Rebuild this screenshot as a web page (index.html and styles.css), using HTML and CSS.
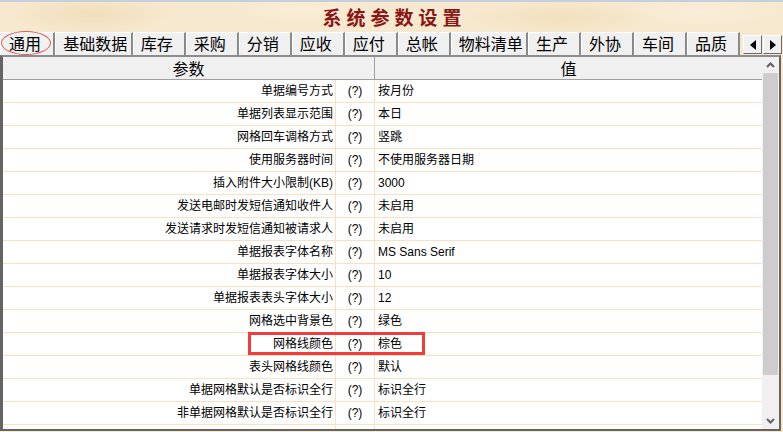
FILE: index.html
```html
<!DOCTYPE html>
<html lang="zh">
<head>
<meta charset="utf-8">
<title>系统参数设置</title>
<link rel="stylesheet" href="styles.css">
</head>
<body>
<div class="topstrip"></div>
<div class="title">系统参数设置</div>
<div class="tabs">
  <div class="tab active">通用<span class="ellipse"></span></div>
  <div class="tab">基础数据</div>
  <div class="tab">库存</div>
  <div class="tab">采购</div>
  <div class="tab">分销</div>
  <div class="tab">应收</div>
  <div class="tab">应付</div>
  <div class="tab">总帐</div>
  <div class="tab">物料清单</div>
  <div class="tab">生产</div>
  <div class="tab">外协</div>
  <div class="tab">车间</div>
  <div class="tab">品质</div>
  <div class="tabnav">
    <div class="navbtn"><svg width="8" height="10" viewBox="0 0 8 10"><polygon points="7,0 7,10 1,5" fill="#000"/></svg></div>
    <div class="navbtn"><svg width="8" height="10" viewBox="0 0 8 10"><polygon points="1,0 1,10 7,5" fill="#000"/></svg></div>
  </div>
</div>
<div class="grid">
  <div class="table">
    <div class="head">
      <div class="h-param">参数</div>
      <div class="h-val">值</div>
    </div>
    <div class="body">
      <div class="row"><div class="c-param">单据编号方式</div><div class="c-q">(?)</div><div class="c-val">按月份</div></div>
      <div class="row"><div class="c-param">单据列表显示范围</div><div class="c-q">(?)</div><div class="c-val">本日</div></div>
      <div class="row"><div class="c-param">网格回车调格方式</div><div class="c-q">(?)</div><div class="c-val">竖跳</div></div>
      <div class="row"><div class="c-param">使用服务器时间</div><div class="c-q">(?)</div><div class="c-val">不使用服务器日期</div></div>
      <div class="row"><div class="c-param">插入附件大小限制(KB)</div><div class="c-q">(?)</div><div class="c-val">3000</div></div>
      <div class="row"><div class="c-param">发送电邮时发短信通知收件人</div><div class="c-q">(?)</div><div class="c-val">未启用</div></div>
      <div class="row"><div class="c-param">发送请求时发短信通知被请求人</div><div class="c-q">(?)</div><div class="c-val">未启用</div></div>
      <div class="row"><div class="c-param">单据报表字体名称</div><div class="c-q">(?)</div><div class="c-val">MS Sans Serif</div></div>
      <div class="row"><div class="c-param">单据报表字体大小</div><div class="c-q">(?)</div><div class="c-val">10</div></div>
      <div class="row"><div class="c-param">单据报表表头字体大小</div><div class="c-q">(?)</div><div class="c-val">12</div></div>
      <div class="row"><div class="c-param">网格选中背景色</div><div class="c-q">(?)</div><div class="c-val">绿色</div></div>
      <div class="row marked"><div class="c-param">网格线颜色</div><div class="c-q">(?)</div><div class="c-val">棕色</div><span class="highlight"></span></div>
      <div class="row"><div class="c-param">表头网格线颜色</div><div class="c-q">(?)</div><div class="c-val">默认</div></div>
      <div class="row"><div class="c-param">单据网格默认是否标识全行</div><div class="c-q">(?)</div><div class="c-val">标识全行</div></div>
      <div class="row"><div class="c-param">非单据网格默认是否标识全行</div><div class="c-q">(?)</div><div class="c-val">标识全行</div></div>
      <div class="row"><div class="c-param"></div><div class="c-q"></div><div class="c-val"></div></div>
    </div>
  </div>
  <div class="vscroll">
    <div class="sbtn"><svg width="9" height="6" viewBox="0 0 9 6"><polyline points="1,5 4.5,1.5 8,5" fill="none" stroke="#606060" stroke-width="2"/></svg></div>
    <div class="thumb"></div>
    <div class="track"></div>
    <div class="sbtn"><svg width="9" height="6" viewBox="0 0 9 6"><polyline points="1,1 4.5,4.5 8,1" fill="none" stroke="#606060" stroke-width="2"/></svg></div>
  </div>
</div>
</body>
</html>
```
FILE: styles.css
```css
html, body {
  margin: 0;
  padding: 0;
}
body {
  width: 783px;
  height: 432px;
  overflow: hidden;
  font-family: "Liberation Sans", "Noto Sans CJK SC", sans-serif;
  background-color: #f7e9cf;
  background-image:
    radial-gradient(ellipse 120px 30px at 90px 14px, rgba(236, 212, 170, 0.55), rgba(236, 212, 170, 0) 70%),
    radial-gradient(ellipse 140px 25px at 560px 18px, rgba(238, 214, 172, 0.5), rgba(238, 214, 172, 0) 70%),
    radial-gradient(ellipse 100px 20px at 300px 10px, rgba(250, 240, 220, 0.7), rgba(250, 240, 220, 0) 70%),
    radial-gradient(ellipse 120px 24px at 700px 12px, rgba(250, 240, 222, 0.7), rgba(250, 240, 222, 0) 70%);
}
.topstrip {
  height: 2px;
  background: #c6cfe0;
}
.title {
  height: 30px;
  display: flex;
  align-items: center;
  justify-content: center;
  font-family: "Noto Sans CJK SC", sans-serif;
  font-size: 19px;
  font-weight: 700;
  letter-spacing: 5px;
  color: #8a1616;
  padding-left: 6px;
  line-height: 30px;
}
.tabs {
  height: 23px;
  display: flex;
  align-items: flex-end;
}
.tab {
  position: relative;
  box-sizing: border-box;
  height: 23px;
  min-width: 53px;
  padding: 0 6px 0 7px;
  background: #f0f0f0;
  border-top: 1px solid #ffffff;
  border-left: 1px solid #ffffff;
  border-right: 2px solid #8a8a8a;
  font-family: "Noto Sans CJK SC", sans-serif;
  font-size: 16px;
  line-height: 21px;
  color: #000;
  white-space: nowrap;
}
.tab.active {
  width: 57px;
  padding-left: 8px;
}
.ellipse {
  position: absolute;
  left: 0;
  top: -2px;
  width: 48px;
  height: 22px;
  border: 1px solid #e05858;
  border-radius: 50%;
}
.tabnav {
  margin-left: 3px;
  display: flex;
  align-self: center;
  margin-top: 2px;
}
.navbtn {
  box-sizing: border-box;
  width: 19px;
  height: 19px;
  background: #f0f0f0;
  border-top: 1px solid #ffffff;
  border-left: 1px solid #ffffff;
  border-right: 1px solid #696969;
  border-bottom: 1px solid #696969;
  display: flex;
  align-items: center;
  justify-content: center;
  margin-right: 1px;
}
.grid {
  box-sizing: border-box;
  width: 781px;
  height: 376px;
  display: flex;
  border-top: 2px solid #8c8c8c;
  border-left: 3px solid #646464;
  border-right: 2px solid #646464;
  border-bottom: 2px solid #646464;
  background: #ffffff;
}
.table {
  width: 759px;
  display: flex;
  flex-direction: column;
}
.head {
  box-sizing: border-box;
  height: 23px;
  display: flex;
  background: #f0f0f0;
  border-bottom: 1px solid #a0a0a0;
  font-family: "Noto Sans CJK SC", sans-serif;
  font-size: 16px;
  line-height: 22px;
  color: #000;
}
.h-param {
  box-sizing: border-box;
  width: 372px;
  border-right: 1px solid #a0a0a0;
  text-align: center;
}
.h-val {
  flex: 1;
  text-align: center;
}
.body {
  flex: 1;
  overflow: hidden;
}
.row {
  position: relative;
  box-sizing: border-box;
  height: 23px;
  display: flex;
  border-bottom: 1px solid #fddfbd;
  font-size: 12px;
  line-height: 22px;
  color: #000;
}
.c-param {
  box-sizing: border-box;
  width: 333px;
  padding-right: 2px;
  text-align: right;
  border-right: 1px solid #fddfbd;
  white-space: nowrap;
}
.c-q {
  box-sizing: border-box;
  width: 39px;
  text-align: center;
  border-right: 1px solid #fddfbd;
}
.c-val {
  flex: 1;
  padding-left: 3px;
  white-space: nowrap;
}
.highlight {
  position: absolute;
  left: 245px;
  top: -1px;
  box-sizing: border-box;
  width: 177px;
  height: 23px;
  border: 3px solid #f23c3c;
}
.vscroll {
  width: 17px;
  display: flex;
  flex-direction: column;
  background: #f0f0f0;
}
.sbtn {
  height: 16px;
  display: flex;
  align-items: center;
  justify-content: center;
}
.thumb {
  height: 302px;
  margin: 0 1px;
  background: #cdcdcd;
}
.track {
  flex: 1;
}
```
